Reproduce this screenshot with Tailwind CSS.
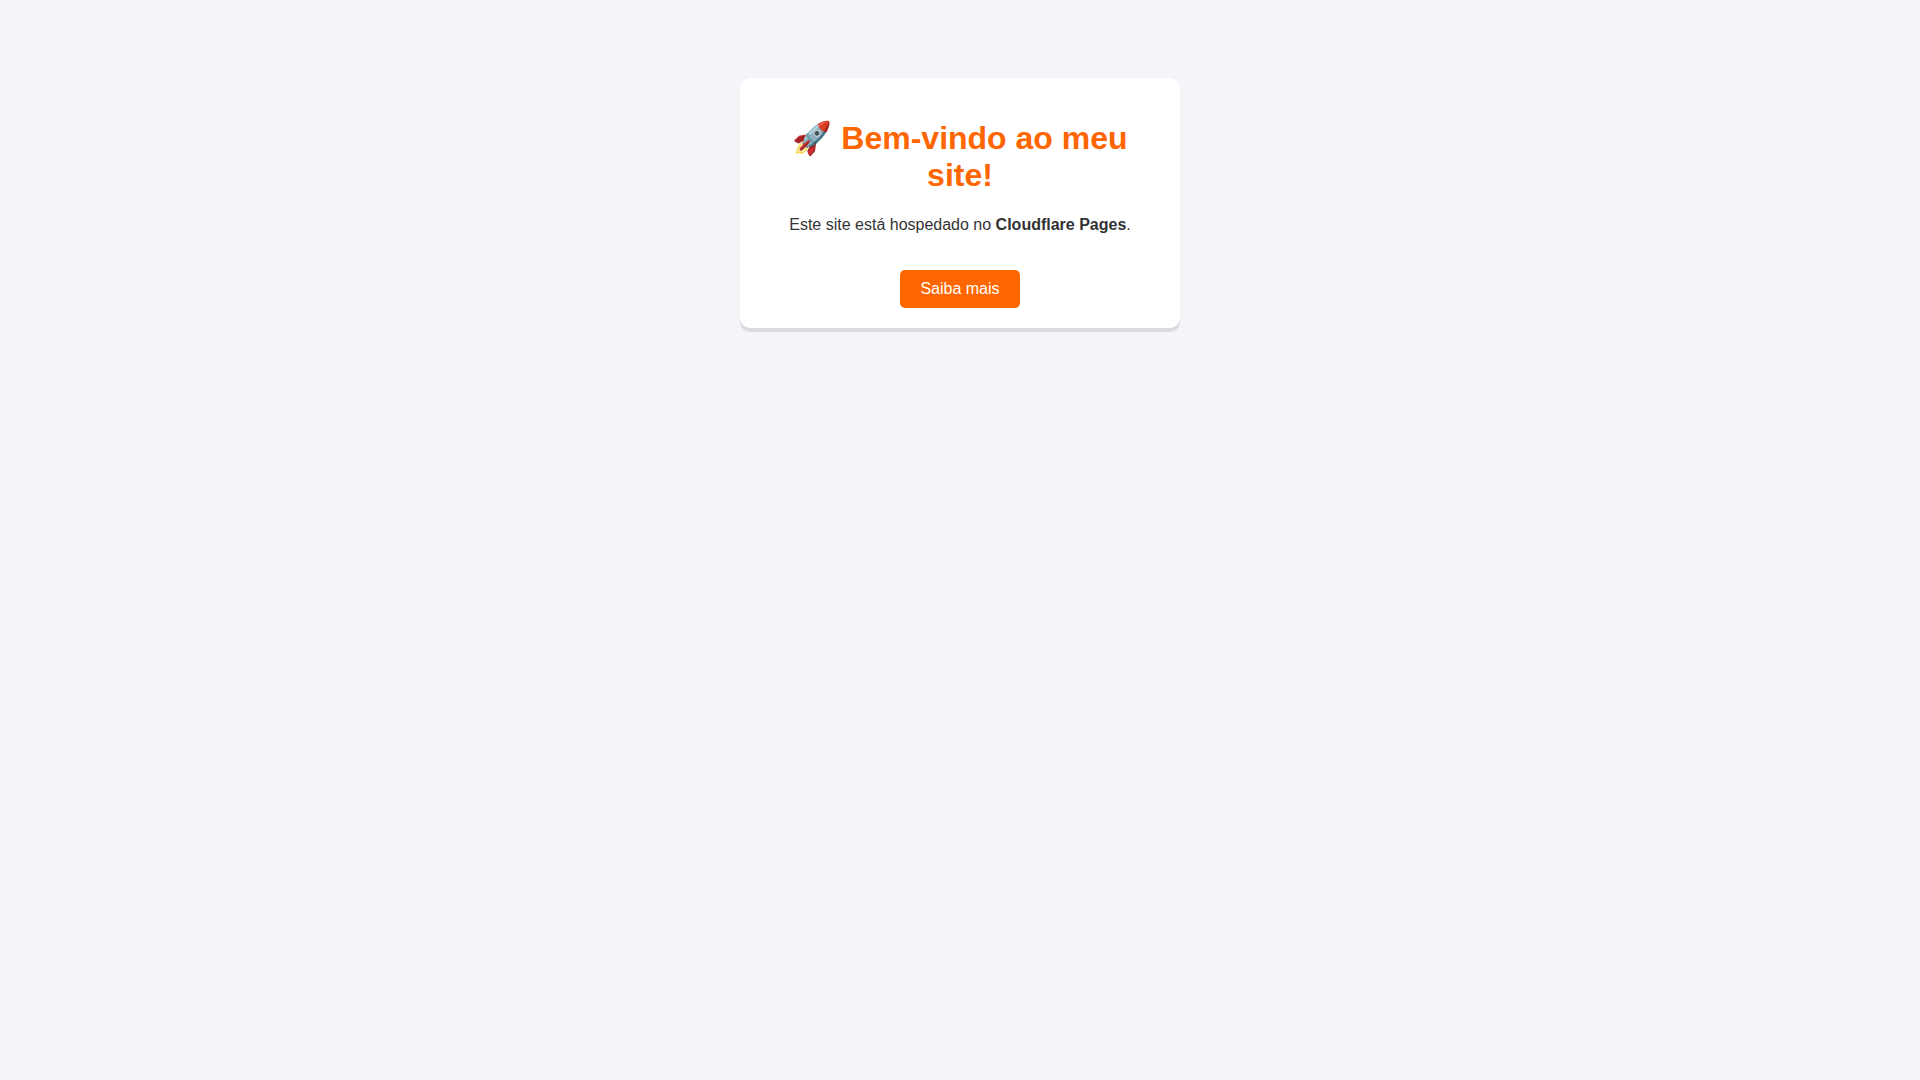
<!DOCTYPE html>
<html lang="pt-BR">
<head>
  <meta charset="UTF-8">
  <meta name="viewport" content="width=device-width, initial-scale=1">
  <title>Meu Site</title>
  <script src="https://cdn.jsdelivr.net/npm/@tailwindcss/browser@4"></script>
</head>
<body class="bg-[#f4f4f9] text-[#333333] text-center font-['Liberation_Sans',Arial,sans-serif] px-5 py-[78px]">

  <!-- Cartão principal -->
  <main class="max-w-[440px] mx-auto bg-white rounded-[10px] px-5 pt-[42px] pb-5 shadow-[0_4px_0_rgba(0,0,0,0.1)]">
    <h1 class="text-[32px] leading-[37px] font-bold text-[#ff6600]">🚀 Bem-vindo ao meu site!</h1>
    <p class="mt-[22px] text-base leading-[18px]">Este site está hospedado no <strong>Cloudflare Pages</strong>.</p>
    <a href="#" class="inline-block mt-9 px-5 py-[10px] bg-[#ff6600] text-white text-base leading-[18px] rounded-[5px] align-top">Saiba mais</a>
  </main>

</body>
</html>
